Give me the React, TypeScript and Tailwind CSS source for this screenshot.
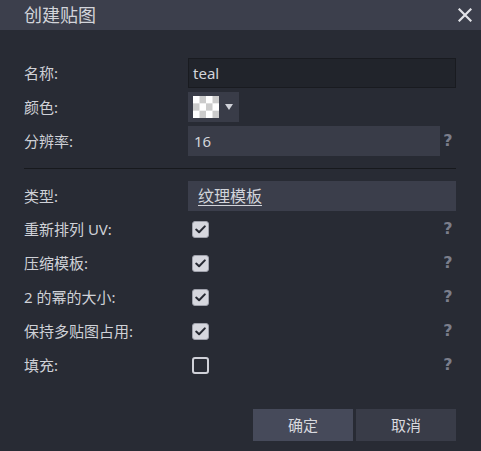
import React from "react";

const font = { fontFamily: '"Noto Sans", "Noto Sans CJK SC", sans-serif' };

function Help() {
  return (
    <span className="flex w-[16px] justify-center text-[16px] font-bold leading-none text-[#7b7e8b]" style={{ fontFamily: '"DejaVu Sans", sans-serif' }}>
      ?
    </span>
  );
}

function Check({ checked }: { checked: boolean }) {
  return checked ? (
    <div className="flex h-[17px] w-[17px] items-center justify-center rounded-[3px] border border-[#9fa1ab] bg-[#d6d7de]">
      <svg width="11" height="9" viewBox="0 0 11 9">
        <path d="M1.2 4.6 L4.1 7.3 L9.8 1.4" fill="none" stroke="#272a33" strokeWidth="2" strokeLinecap="round" strokeLinejoin="round" />
      </svg>
    </div>
  ) : (
    <div className="h-[17px] w-[17px] rounded-[3px] border-2 border-[#d0d1d8]" />
  );
}

function Row({ label, children, help, h = "h-[30px]" }: { label: string; children?: React.ReactNode; help?: boolean; h?: string }) {
  return (
    <div className={`flex ${h} items-center`}>
      <div className="w-[164px] text-[15px] text-[#cfd1d7]">{label}</div>
      <div className="flex flex-1 items-center self-stretch">
        <div className="flex flex-1 items-center self-stretch">{children}</div>
        {help ? <Help /> : null}
      </div>
    </div>
  );
}

export default function App() {
  const checks: [string, boolean][] = [
    ["重新排列 UV:", true],
    ["压缩模板:", true],
    ["2 的幂的大小:", true],
    ["保持多贴图占用:", true],
    ["填充:", false],
  ];
  return (
    <div className="h-[451px] w-[481px] bg-[#282b34] text-[#cfd1d7]" style={font}>
      <div className="flex h-[30px] items-center justify-between bg-[#3c3f4c] pl-[24px] pr-[9px]">
        <span className="text-[18px] text-[#d2d4da]">创建贴图</span>
        <svg width="14" height="14" viewBox="0 0 14 14">
          <path d="M1.5 1.5 L12.5 12.5 M12.5 1.5 L1.5 12.5" stroke="#e2e3e8" strokeWidth="2.2" strokeLinecap="square" />
        </svg>
      </div>
      <div className="flex flex-col pl-[24px] pr-[25px] pt-[28px]">
        <div className="flex flex-col gap-[4px]">
          <Row label="名称:">
            <div className="flex h-full flex-1 items-center border border-[#191b20] bg-[#21242b] pl-[4px] text-[15px] text-[#d2d4da]">teal</div>
          </Row>
          <Row label="颜色:">
            <div className="flex h-full w-[51px] items-center gap-[6px] bg-[#393c48] pl-[5px]">
              <svg width="26" height="22" viewBox="0 0 4 3" preserveAspectRatio="none">
                <rect width="4" height="3" fill="#ffffff" />
                <rect x="1" y="0" width="1" height="1" fill="#cbcbcb" />
                <rect x="3" y="0" width="1" height="1" fill="#cbcbcb" />
                <rect x="0" y="1" width="1" height="1" fill="#cbcbcb" />
                <rect x="2" y="1" width="1" height="1" fill="#cbcbcb" />
                <rect x="1" y="2" width="1" height="1" fill="#cbcbcb" />
                <rect x="3" y="2" width="1" height="1" fill="#cbcbcb" />
              </svg>
              <svg width="8" height="6" viewBox="0 0 8 6">
                <path d="M0 0 L8 0 L4 6 Z" fill="#cfd1d8" />
              </svg>
            </div>
          </Row>
          <Row label="分辨率:" help>
            <div className="flex h-full flex-1 items-center bg-[#393c48] pl-[6px] text-[15px] text-[#d2d4da]">16</div>
          </Row>
        </div>
        <div className="mb-[12px] mt-[12px] h-px bg-[#17191d]" />
        <Row label="类型:">
          <div className="flex h-full flex-1 items-center bg-[#3b3e4b] pl-[10px] text-[16px] text-[#d2d4da] underline underline-offset-[3px]">纹理模板</div>
        </Row>
        <div className="mt-px flex flex-col">
          {checks.map(([l, c]) => (
            <Row key={l} label={l} help h="h-[34px]">
              <div className="pl-[4px]">
                <Check checked={c} />
              </div>
            </Row>
          ))}
        </div>
        <div className="mt-[27px] flex justify-end gap-[3px]">
          <button className="h-[32px] w-[100px] bg-[#464a5a] text-[15px] text-[#d8d9df]">确定</button>
          <button className="h-[32px] w-[100px] bg-[#393c48] text-[15px] text-[#d8d9df]">取消</button>
        </div>
      </div>
    </div>
  );
}
